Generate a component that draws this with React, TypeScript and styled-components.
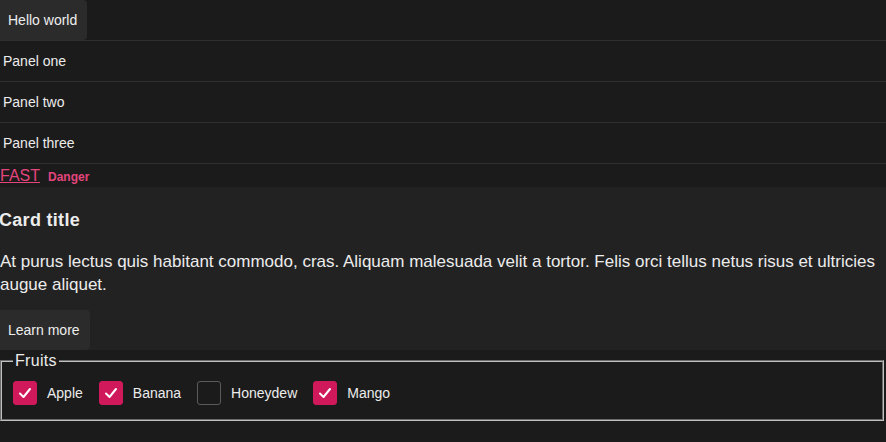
import React from "react";
import styled, { createGlobalStyle } from "styled-components";

const Global = createGlobalStyle`
  html, body { margin: 0; padding: 0; background: #1b1b1b; }
  body { font-family: "Liberation Sans", Arial, sans-serif; color: #ececec; }
`;

const Page = styled.div`
  display: flex;
  flex-direction: column;
  width: 886px;
  min-height: 442px;
  background: #1b1b1b;
`;

const Button = styled.button`
  align-self: flex-start;
  height: 40px;
  padding: 0 10px 0 8px;
  border: none;
  border-radius: 0 4px 4px 0;
  background: #2b2b2b;
  color: #eeeeee;
  font-family: inherit;
  font-size: 14px;
`;

const Accordion = styled.div`
  display: flex;
  flex-direction: column;
  border-top: 1px solid #2f2f2f;
`;

const Panel = styled.div`
  display: flex;
  align-items: center;
  height: 40px;
  padding-left: 3px;
  border-bottom: 1px solid #2f2f2f;
  font-size: 14px;
  color: #ececec;
`;

const LinkRow = styled.div`
  display: flex;
  align-items: center;
  gap: 8px;
  height: 23px;
`;

const Link = styled.a`
  color: #e3457c;
  font-size: 16px;
  text-decoration: underline;
`;

const Badge = styled.span`
  color: #e3457c;
  font-size: 12px;
  font-weight: bold;
  padding-top: 3px;
`;

const Card = styled.div`
  display: flex;
  flex-direction: column;
  background: #222222;
  padding-top: 22px;
`;

const CardTitle = styled.h3`
  margin: 0 0 0 -1px;
  font-size: 18px;
  font-weight: bold;
  line-height: 22px;
  letter-spacing: 0.3px;
`;

const CardText = styled.p`
  margin: 19px 0 14px;
  font-size: 17px;
  line-height: 23px;
  color: #ececec;
`;

const Fieldset = styled.fieldset`
  margin: 2px 2px 0 0;
  padding: 11px 12px 14px 11px;
  border: 2px groove #c0c0c0;
  min-width: 0;
`;

const Legend = styled.legend`
  padding: 0 2px;
  font-size: 16px;
  letter-spacing: 0.3px;
  color: #ececec;
`;

const Options = styled.div`
  display: flex;
  align-items: center;
  gap: 16px;
`;

const Option = styled.label`
  display: flex;
  align-items: center;
  gap: 10px;
  font-size: 14px;
  color: #ececec;
`;

const Box = styled.span<{ $checked: boolean }>`
  display: flex;
  align-items: center;
  justify-content: center;
  width: 24px;
  height: 24px;
  box-sizing: border-box;
  border-radius: 3px;
  background: ${(p) => (p.$checked ? "#d0195a" : "transparent")};
  border: 1px solid ${(p) => (p.$checked ? "#d0195a" : "#5a5a5a")};
`;

const Check = () => (
  <svg width="14" height="14" viewBox="0 0 14 14">
    <path d="M2 7.5 L5.5 11 L12 3" fill="none" stroke="#ffffff" strokeWidth="2" strokeLinecap="round" strokeLinejoin="round" />
  </svg>
);

const fruits = [
  { name: "Apple", checked: true },
  { name: "Banana", checked: true },
  { name: "Honeydew", checked: false },
  { name: "Mango", checked: true },
];

export default function App() {
  return (
    <Page>
      <Global />
      <Button>Hello world</Button>
      <Accordion>
        <Panel>Panel one</Panel>
        <Panel>Panel two</Panel>
        <Panel>Panel three</Panel>
      </Accordion>
      <LinkRow>
        <Link href="#">FAST</Link>
        <Badge>Danger</Badge>
      </LinkRow>
      <Card>
        <CardTitle>Card title</CardTitle>
        <CardText>
          At purus lectus quis habitant commodo, cras. Aliquam malesuada velit a tortor. Felis orci tellus netus risus et ultricies augue aliquet.
        </CardText>
        <Button>Learn more</Button>
      </Card>
      <Fieldset>
        <Legend>Fruits</Legend>
        <Options>
          {fruits.map((f) => (
            <Option key={f.name}>
              <Box $checked={f.checked}>{f.checked && <Check />}</Box>
              {f.name}
            </Option>
          ))}
        </Options>
      </Fieldset>
    </Page>
  );
}
